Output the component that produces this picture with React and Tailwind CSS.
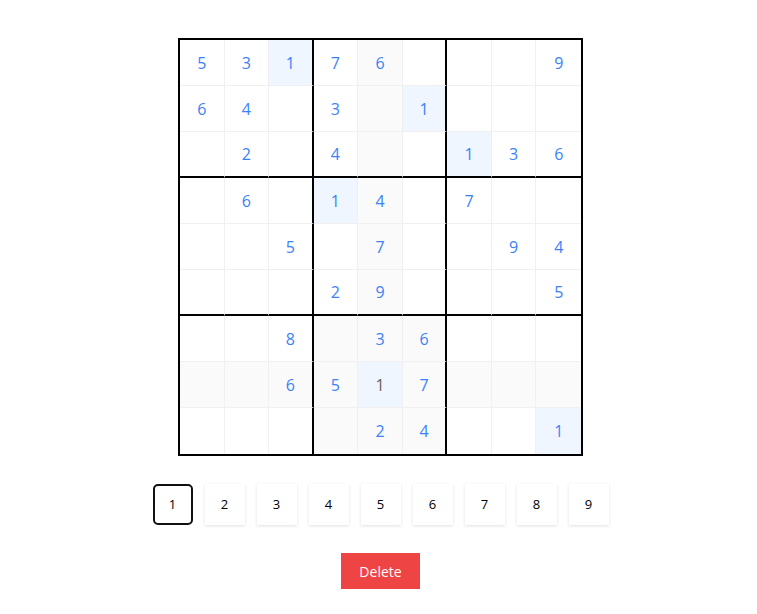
import React, { useState } from "react";

const PUZZLE = [
  [5, 3, 1, 7, 6, 0, 0, 0, 9],
  [6, 4, 0, 3, 0, 1, 0, 0, 0],
  [0, 2, 0, 4, 0, 0, 1, 3, 6],
  [0, 6, 0, 1, 4, 0, 7, 0, 0],
  [0, 0, 5, 0, 7, 0, 0, 9, 4],
  [0, 0, 0, 2, 9, 0, 0, 0, 5],
  [0, 0, 8, 0, 3, 6, 0, 0, 0],
  [0, 0, 6, 5, 1, 7, 0, 0, 0],
  [0, 0, 0, 0, 2, 4, 0, 0, 1],
];

export default function App() {
  const [board] = useState(PUZZLE);
  const [selected, setSelected] = useState({ row: 7, col: 4 });
  const [picked, setPicked] = useState(1);

  const selValue = board[selected.row][selected.col];

  const cellClass = (r, c, value) => {
    const isSelected = r === selected.row && c === selected.col;
    const sameValue = value !== 0 && value === selValue;
    const sameBox =
      Math.floor(r / 3) === Math.floor(selected.row / 3) &&
      Math.floor(c / 3) === Math.floor(selected.col / 3);
    const peer = r === selected.row || c === selected.col || sameBox;

    let cls = "flex items-center justify-center text-[16px] cursor-pointer ";
    if (c === 2 || c === 5) cls += "border-r-2 border-r-black ";
    else if (c !== 8) cls += "border-r border-r-[#f0f0f0] ";
    if (r === 2 || r === 5) cls += "border-b-2 border-b-black ";
    else if (r !== 8) cls += "border-b border-b-[#f0f0f0] ";

    if (isSelected || sameValue) cls += "bg-[#eff6ff] ";
    else if (peer) cls += "bg-[#fafafa] ";
    else cls += "bg-white ";

    cls += isSelected ? "text-[#6b6458]" : "text-[#3b82f6]";
    return cls;
  };

  return (
    <div
      className="min-h-screen bg-white flex flex-col items-center pl-1 pt-[38px]"
      style={{ fontFamily: '"Open Sans", "Noto Sans", sans-serif' }}
    >
      <div className="grid grid-cols-9 grid-rows-9 w-[405px] h-[418px] border-2 border-black">
        {board.map((row, r) =>
          row.map((value, c) => (
            <div
              key={`${r}-${c}`}
              className={cellClass(r, c, value)}
              onClick={() => setSelected({ row: r, col: c })}
            >
              {value !== 0 ? value : ""}
            </div>
          ))
        )}
      </div>

      <div className="mt-[28px] flex gap-3">
        {[1, 2, 3, 4, 5, 6, 7, 8, 9].map((n) => (
          <button
            key={n}
            type="button"
            onClick={() => setPicked(n)}
            className={
              n === picked
                ? "w-10 h-[41px] rounded-[5px] border-2 border-[#111111] bg-white text-[13px] text-black flex items-center justify-center"
                : "w-10 h-[41px] bg-white text-[13px] text-black shadow-[0_1px_3px_rgba(0,0,0,0.12)] flex items-center justify-center"
            }
          >
            {n}
          </button>
        ))}
      </div>

      <button
        type="button"
        className="mt-[28px] w-[79px] h-[36px] bg-[#ef4444] text-white text-[14px]"
      >
        Delete
      </button>
    </div>
  );
}
